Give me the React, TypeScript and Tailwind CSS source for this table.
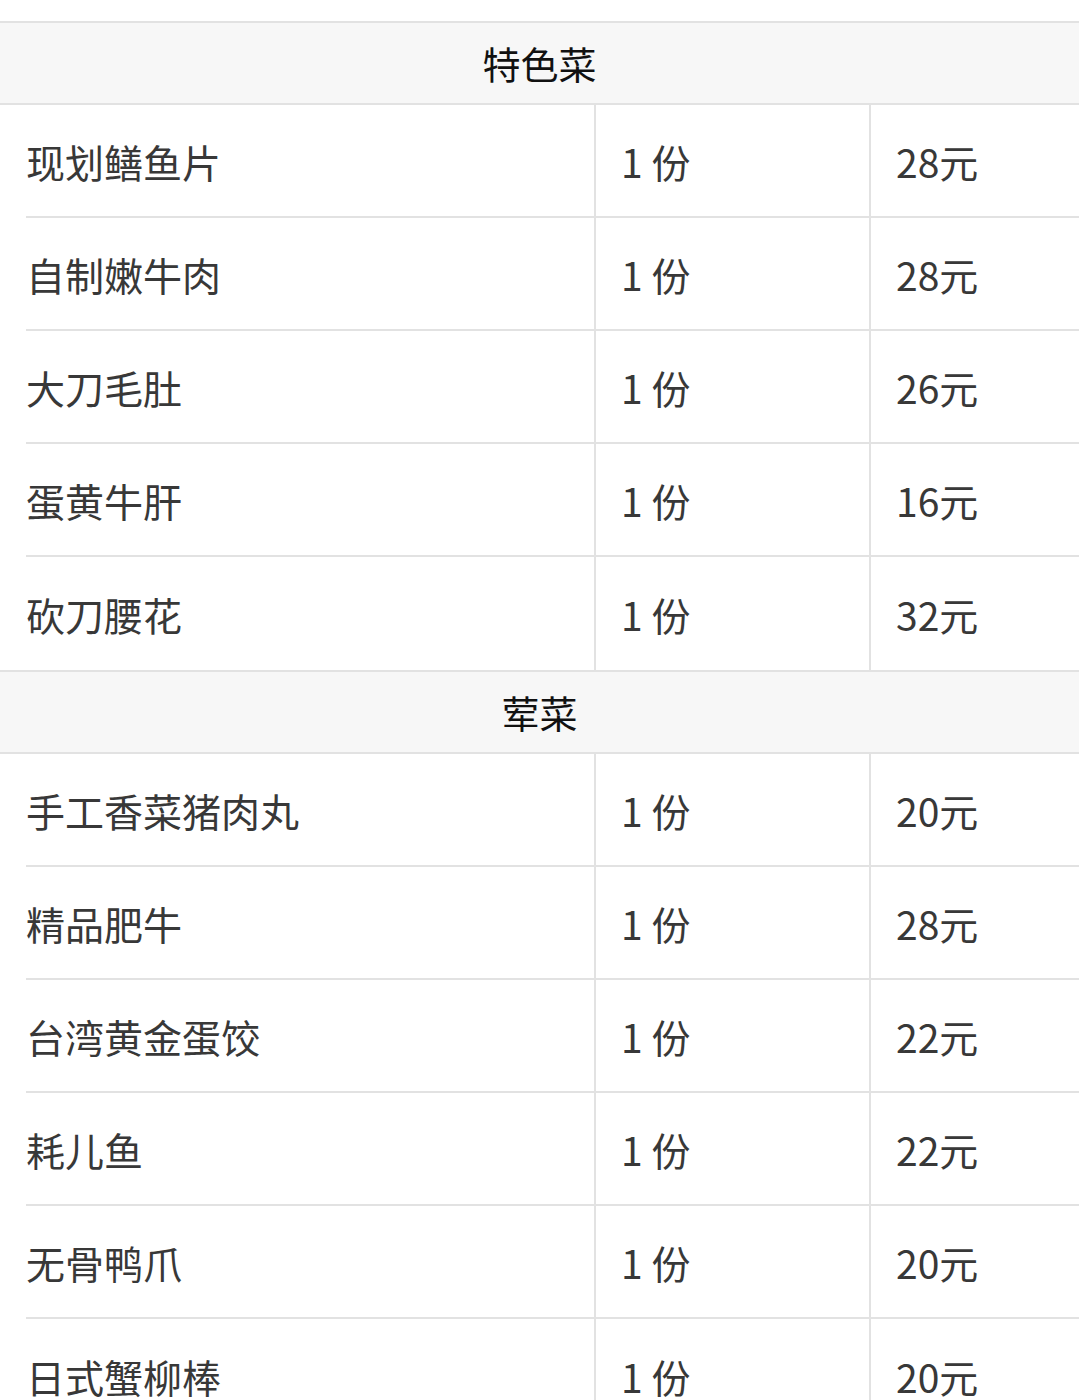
const font = { fontFamily: '"Noto Sans CJK SC", "Noto Sans", sans-serif' };

type Dish = { name: string; qty: string; price: string };

const sections: { title: string; dishes: Dish[] }[] = [
  {
    title: '特色菜',
    dishes: [
      { name: '现划鳝鱼片', qty: '1 份', price: '28元' },
      { name: '自制嫩牛肉', qty: '1 份', price: '28元' },
      { name: '大刀毛肚', qty: '1 份', price: '26元' },
      { name: '蛋黄牛肝', qty: '1 份', price: '16元' },
      { name: '砍刀腰花', qty: '1 份', price: '32元' },
    ],
  },
  {
    title: '荤菜',
    dishes: [
      { name: '手工香菜猪肉丸', qty: '1 份', price: '20元' },
      { name: '精品肥牛', qty: '1 份', price: '28元' },
      { name: '台湾黄金蛋饺', qty: '1 份', price: '22元' },
      { name: '耗儿鱼', qty: '1 份', price: '22元' },
      { name: '无骨鸭爪', qty: '1 份', price: '20元' },
      { name: '日式蟹柳棒', qty: '1 份', price: '20元' },
    ],
  },
];

function Row({ dish, last }: { dish: Dish; last: boolean }) {
  const line = last ? '' : 'border-b-2 border-[#e2e2e2]';
  return (
    <div className="flex h-[113px] text-[39px] leading-none text-[#383838]">
      <div className="w-[594px] pl-[26px] flex">
        <div className={`flex-1 flex items-center pt-[1px] ${line}`}>{dish.name}</div>
      </div>
      <div className={`w-[275px] border-l-2 border-[#e2e2e2] pl-[25px] flex items-center pt-[1px] ${line}`}>
        {dish.qty}
      </div>
      <div className={`flex-1 border-l-2 border-[#e2e2e2] pl-[25px] flex items-center pt-[1px] ${line}`}>
        {dish.price}
      </div>
    </div>
  );
}

export default function App() {
  return (
    <main className="min-h-screen w-[1079px] bg-white pt-[21px] overflow-hidden" style={font}>
      {sections.map((s) => (
        <section key={s.title}>
          <div className="h-[84px] border-y-2 border-[#e2e2e2] bg-[#f7f7f7] flex items-center justify-center text-[38px] leading-none text-[#111]">
            {s.title}
          </div>
          {s.dishes.map((d, i) => (
            <Row key={d.name} dish={d} last={i === s.dishes.length - 1} />
          ))}
        </section>
      ))}
    </main>
  );
}
